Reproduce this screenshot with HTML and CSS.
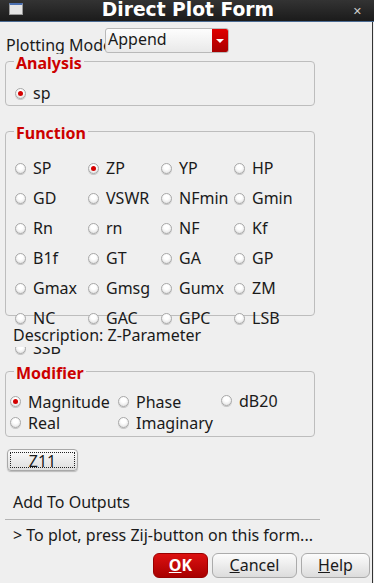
FILE: index.html
```html
<!doctype html>
<html>
<head>
<meta charset="utf-8">
<title>Direct Plot Form</title>
<link rel="stylesheet" href="styles.css">
</head>
<body>
<div class="win">
  <div class="titlebar">
    <span class="appicon"></span>
    <span class="title">Direct Plot Form</span>
    <span class="close">&#x2715;</span>
  </div>
  <div class="body">
    <div class="mode-row">
      <span class="mode-label">Plotting Mode</span>
      <div class="combo"><span class="combo-text">Append</span><span class="combo-arrow"></span></div>
    </div>

    <fieldset class="group analysis">
      <legend>Analysis</legend>
      <div class="row1"><label class="opt"><i class="radio on"></i>sp</label></div>
    </fieldset>

    <fieldset class="group function">
      <legend>Function</legend>
      <div class="fgrid">
        <label class="opt"><i class="radio"></i>SP</label>
        <label class="opt"><i class="radio on"></i>ZP</label>
        <label class="opt"><i class="radio"></i>YP</label>
        <label class="opt"><i class="radio"></i>HP</label>
        <label class="opt"><i class="radio"></i>GD</label>
        <label class="opt"><i class="radio"></i>VSWR</label>
        <label class="opt"><i class="radio"></i>NFmin</label>
        <label class="opt"><i class="radio"></i>Gmin</label>
        <label class="opt"><i class="radio"></i>Rn</label>
        <label class="opt"><i class="radio"></i>rn</label>
        <label class="opt"><i class="radio"></i>NF</label>
        <label class="opt"><i class="radio"></i>Kf</label>
        <label class="opt"><i class="radio"></i>B1f</label>
        <label class="opt"><i class="radio"></i>GT</label>
        <label class="opt"><i class="radio"></i>GA</label>
        <label class="opt"><i class="radio"></i>GP</label>
        <label class="opt"><i class="radio"></i>Gmax</label>
        <label class="opt"><i class="radio"></i>Gmsg</label>
        <label class="opt"><i class="radio"></i>Gumx</label>
        <label class="opt"><i class="radio"></i>ZM</label>
        <label class="opt"><i class="radio"></i>NC</label>
        <label class="opt"><i class="radio"></i>GAC</label>
        <label class="opt"><i class="radio"></i>GPC</label>
        <label class="opt"><i class="radio"></i>LSB</label>
        <label class="opt"><i class="radio"></i>SSB</label>
      </div>
    </fieldset>

    <div class="desc">Description: Z-Parameter</div>

    <fieldset class="group modifier">
      <legend>Modifier</legend>
      <div class="mgrid">
        <label class="opt"><i class="radio on"></i>Magnitude</label>
        <label class="opt"><i class="radio"></i>Phase</label>
        <label class="opt up"><i class="radio"></i>dB20</label>
        <label class="opt"><i class="radio"></i>Real</label>
        <label class="opt"><i class="radio"></i>Imaginary</label>
      </div>
    </fieldset>

    <div class="zbtn"><span class="focus">Z11</span></div>

    <div class="line-text">Add To Outputs</div>
    <div class="sep"></div>
    <div class="line-text hint">&gt; To plot, press Zij-button on this form...</div>

    <div class="buttons">
      <div class="btn ok"><u>O</u>K</div>
      <div class="btn cancel"><u>C</u>ancel</div>
      <div class="btn help"><u>H</u>elp</div>
    </div>
  </div>
</div>
</body>
</html>
```

FILE: styles.css
```css
*{ margin:0; padding:0; box-sizing:border-box; }
html,body{ width:374px; height:583px; overflow:hidden; background:#efefef; }
body{ font-family:"Noto Sans","DejaVu Sans",sans-serif; font-size:16px; color:#1a1a1a; }

.win{ width:374px; height:583px; display:flex; flex-direction:column; }

/* title bar */
.titlebar{ height:22px; display:flex; align-items:center; padding:0 9px; color:#fff;
  background:linear-gradient(#333,#1b1b1b); border-bottom:1px solid #4b6b93; }
.appicon{ width:14px; height:12px; margin-top:-3px; border:1px solid #999; border-top:2px solid #4a6fb0; background:#e4e4e4; }
.title{ flex:1; text-align:center; font-family:"DejaVu Sans",sans-serif; font-weight:bold; font-size:18.7px; line-height:20px; margin-top:-2px; }
.close{ font-size:11px; color:#ccc; margin-right:3px; }

.body{ flex:1; border-right:1px solid #333; margin-right:1px; padding:0 0 0 5px; display:flex; flex-direction:column; }

/* plotting mode */
.mode-row{ display:flex; align-items:flex-start; margin-top:6px; height:25px; }
.mode-label{ width:100px; overflow:hidden; white-space:nowrap; padding:8px 0 0 1px; line-height:18px; }
.combo{ width:124px; height:25px; display:flex; border:1px solid #b9b9b9; border-radius:3px; overflow:hidden;
  background:linear-gradient(#fdfdfd,#e9e9e9); }
.combo-text{ flex:1; padding-left:2px; line-height:21px; }
.combo-arrow{ width:16px; background:linear-gradient(#e00000,#a80000); position:relative; }
.combo-arrow::after{ content:""; position:absolute; left:4px; top:10px; border-left:4px solid transparent; border-right:4px solid transparent; border-top:4px solid #fff; }

/* group boxes */
.group{ width:310px; border:1px solid #bdbdbd; border-radius:4px; }
.group legend{ padding:4px 2px 0; font-weight:bold; color:#cc0000; line-height:16px; font-size:16px; }
.opt{ display:flex; align-items:center; white-space:nowrap; }
.radio{ width:11px; height:11px; border-radius:50%; margin-right:7px; flex:none;
  border:1px solid #a9a9a9; background:radial-gradient(circle at 50% 35%,#fff 30%,#dcdcdc 100%);
  box-shadow:0 1px 0 #c7c7c7; display:flex; align-items:center; justify-content:center; }
.radio.on::after{ content:""; width:5px; height:5px; border-radius:50%; background:#d40000; }

.analysis{ margin-top:-2px; padding:12px 8px 2px; }
.analysis .row1{ height:20px; display:flex; align-items:center; padding-left:1px; }

.function{ margin-top:15px; height:195px; padding:12px 0 0 8px; }
.fgrid{ display:grid; grid-template-columns:repeat(4,73px); grid-auto-rows:30px; align-items:center; padding-left:1px; }

.desc{ position:relative; margin-top:9px; line-height:20px; height:22px; padding-left:8px; background:#efefef; }

.modifier{ margin-top:14px; padding:10px 0 3px 4px; }
.modifier legend{ margin-left:4px; }
.mgrid{ display:grid; grid-template-columns:108px 103px 90px; grid-auto-rows:21px; align-items:center; }
.mgrid .up{ margin-top:-2px; }

/* buttons */
.zbtn{ margin:12px 0 0 2px; width:71px; height:22px; padding:2px; border:1px solid #a8a8a8; border-radius:4px;
  background:linear-gradient(#fbfbfb,#dedede); box-shadow:0 1px 1px #bbb; }
.zbtn .focus{ display:block; height:100%; border:1px dotted #222; text-align:center; line-height:16px; }

.line-text{ line-height:20px; padding-left:8px; margin-top:21px; }
.sep{ width:315px; height:1px; background:#b4b4b4; margin-top:7px; }
.hint{ margin-top:5px; }

.buttons{ display:flex; justify-content:flex-end; gap:4px; margin-top:8px; padding-right:2px; }
.btn{ height:25px; border-radius:6px; text-align:center; line-height:23px; border:1px solid #ababab;
  background:linear-gradient(#fcfcfc,#dcdcdc); }
.btn.ok{ width:55px; background:linear-gradient(#dc1010,#a80000); border-color:#900; color:#fff; font-weight:bold; }
.btn.cancel{ width:85px; }
.btn.help{ width:69px; }
```
